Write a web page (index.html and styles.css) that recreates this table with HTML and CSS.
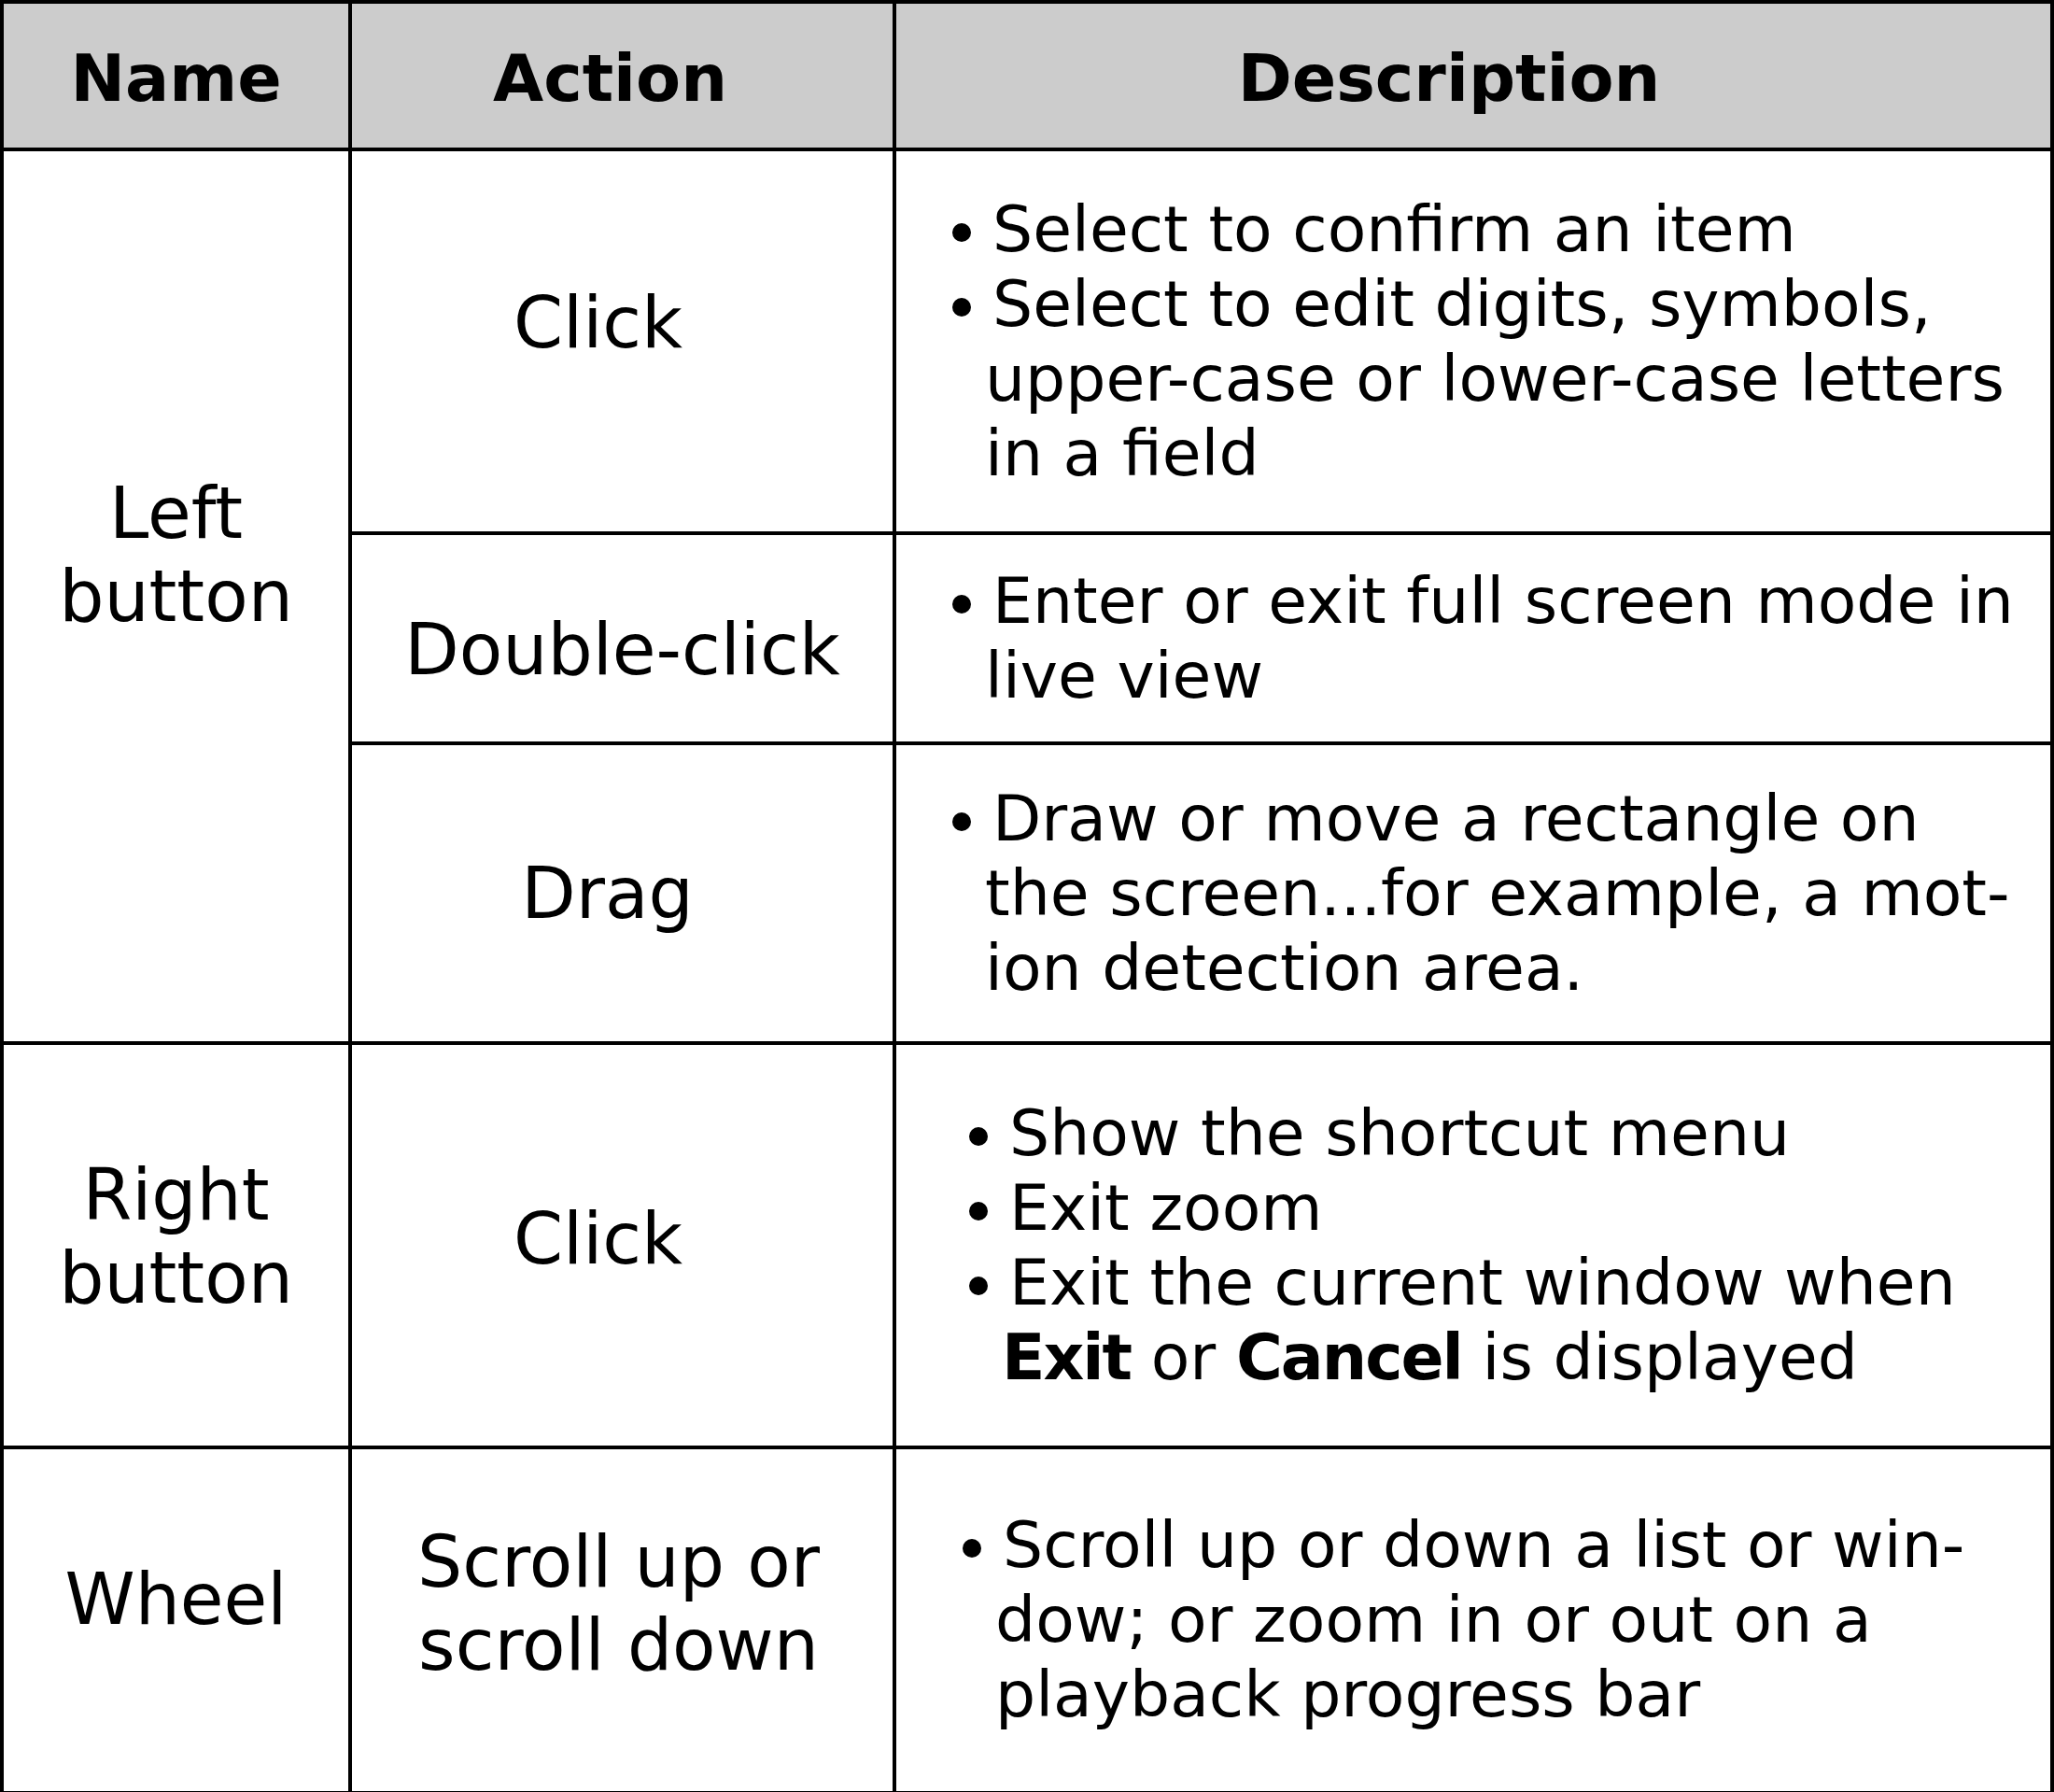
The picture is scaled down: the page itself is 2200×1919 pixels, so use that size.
FILE: index.html
```html
<!DOCTYPE html>
<html lang="en">
<head>
    <meta charset="UTF-8">
    <meta name="viewport" content="width=device-width, initial-scale=1.0">
    <title>Mouse operations</title>
    <link rel="stylesheet" href="styles.css">
</head>
<body>
    <table class="mouse-table">
        <colgroup>
            <col class="col-name">
            <col class="col-action">
            <col class="col-desc">
        </colgroup>
        <thead>
            <tr class="row-head">
                <th>Name</th>
                <th class="head-action">Action</th>
                <th class="head-desc">Description</th>
            </tr>
        </thead>
        <tbody>
            <tr class="row-1">
                <td class="name name-left" rowspan="3">Left<br>button</td>
                <td class="action action-click">Click</td>
                <td class="desc">
                    <ul class="bullets">
                        <li>Select to confirm an item</li>
                        <li>Select to edit digits, symbols,<br>upper-case or lower-case letters<br>in a field</li>
                    </ul>
                </td>
            </tr>
            <tr class="row-2">
                <td class="action action-double">Double-click</td>
                <td class="desc">
                    <ul class="bullets">
                        <li>Enter or exit full screen mode in<br>live view</li>
                    </ul>
                </td>
            </tr>
            <tr class="row-3">
                <td class="action action-drag">Drag</td>
                <td class="desc">
                    <ul class="bullets">
                        <li>Draw or move a rectangle on<br>the screen...for example, a mot-<br>ion detection area.</li>
                    </ul>
                </td>
            </tr>
            <tr class="row-4">
                <td class="name name-right">Right<br>button</td>
                <td class="action action-rclick">Click</td>
                <td class="desc desc-right">
                    <ul class="bullets">
                        <li>Show the shortcut menu</li>
                        <li>Exit zoom</li>
                        <li>Exit the current window when<br><b>Exit</b> or <b>Cancel</b> is displayed</li>
                    </ul>
                </td>
            </tr>
            <tr class="row-5">
                <td class="name name-wheel">Wheel</td>
                <td class="action action-scroll">Scroll up or<br>scroll down</td>
                <td class="desc desc-wheel">
                    <ul class="bullets">
                        <li>Scroll up or down a list or win-<br>dow; or zoom in or out on a<br>playback progress bar</li>
                    </ul>
                </td>
            </tr>
        </tbody>
    </table>
</body>
</html>
```

FILE: styles.css
```css
body {
    margin: 0;
    background: #fff;
    color: #000;
    font-family: "DejaVu Sans", "Liberation Sans", sans-serif;
}
.mouse-table {
    width: 2200px;
    border-collapse: collapse;
    table-layout: fixed;
    border: 4px solid #000;
}
.col-name { width: 373px; }
.col-action { width: 583px; }
.col-desc { width: 1240px; }

th,
td {
    border: 4px solid #000;
    padding: 0;
    vertical-align: middle;
}
th {
    background: #ccc;
    font-size: 70px;
    font-weight: bold;
    text-align: center;
    padding-top: 6px;
}
.head-action { padding-right: 26px; }
.head-desc { padding-right: 52px; }

.row-head { height: 158px; }
.row-1 { height: 411px; }
.row-2 { height: 225px; }
.row-3 { height: 321px; }
.row-4 { height: 433px; }
.row-5 { height: 370px; }

.name,
.action {
    font-size: 76px;
    line-height: 89px;
    text-align: center;
}
.name-left { padding-bottom: 89px; }
.name-right { padding-bottom: 19px; }
.name-wheel { padding-bottom: 45px; }

.action-click { padding: 0 52px 41px 0; }
.action-double { padding-top: 23px; }
.action-drag { padding-right: 32px; }
.action-rclick { padding: 0 52px 15px 0; }
.action-scroll { padding: 0 8px 37px 0; }

.desc {
    font-size: 68px;
    line-height: 80px;
    padding-left: 95px;
}
.desc-right { padding-left: 113px; }
.desc-wheel { padding-left: 106px; }
.desc b { letter-spacing: -2px; }

.bullets {
    list-style: none;
    margin: 0;
    padding: 0;
    white-space: nowrap;
}
.bullets li::before {
    content: "";
    display: inline-block;
    width: 20px;
    height: 20px;
    border-radius: 50%;
    background: #000;
    vertical-align: 10px;
    margin-left: -35px;
    margin-right: 23px;
}
```
